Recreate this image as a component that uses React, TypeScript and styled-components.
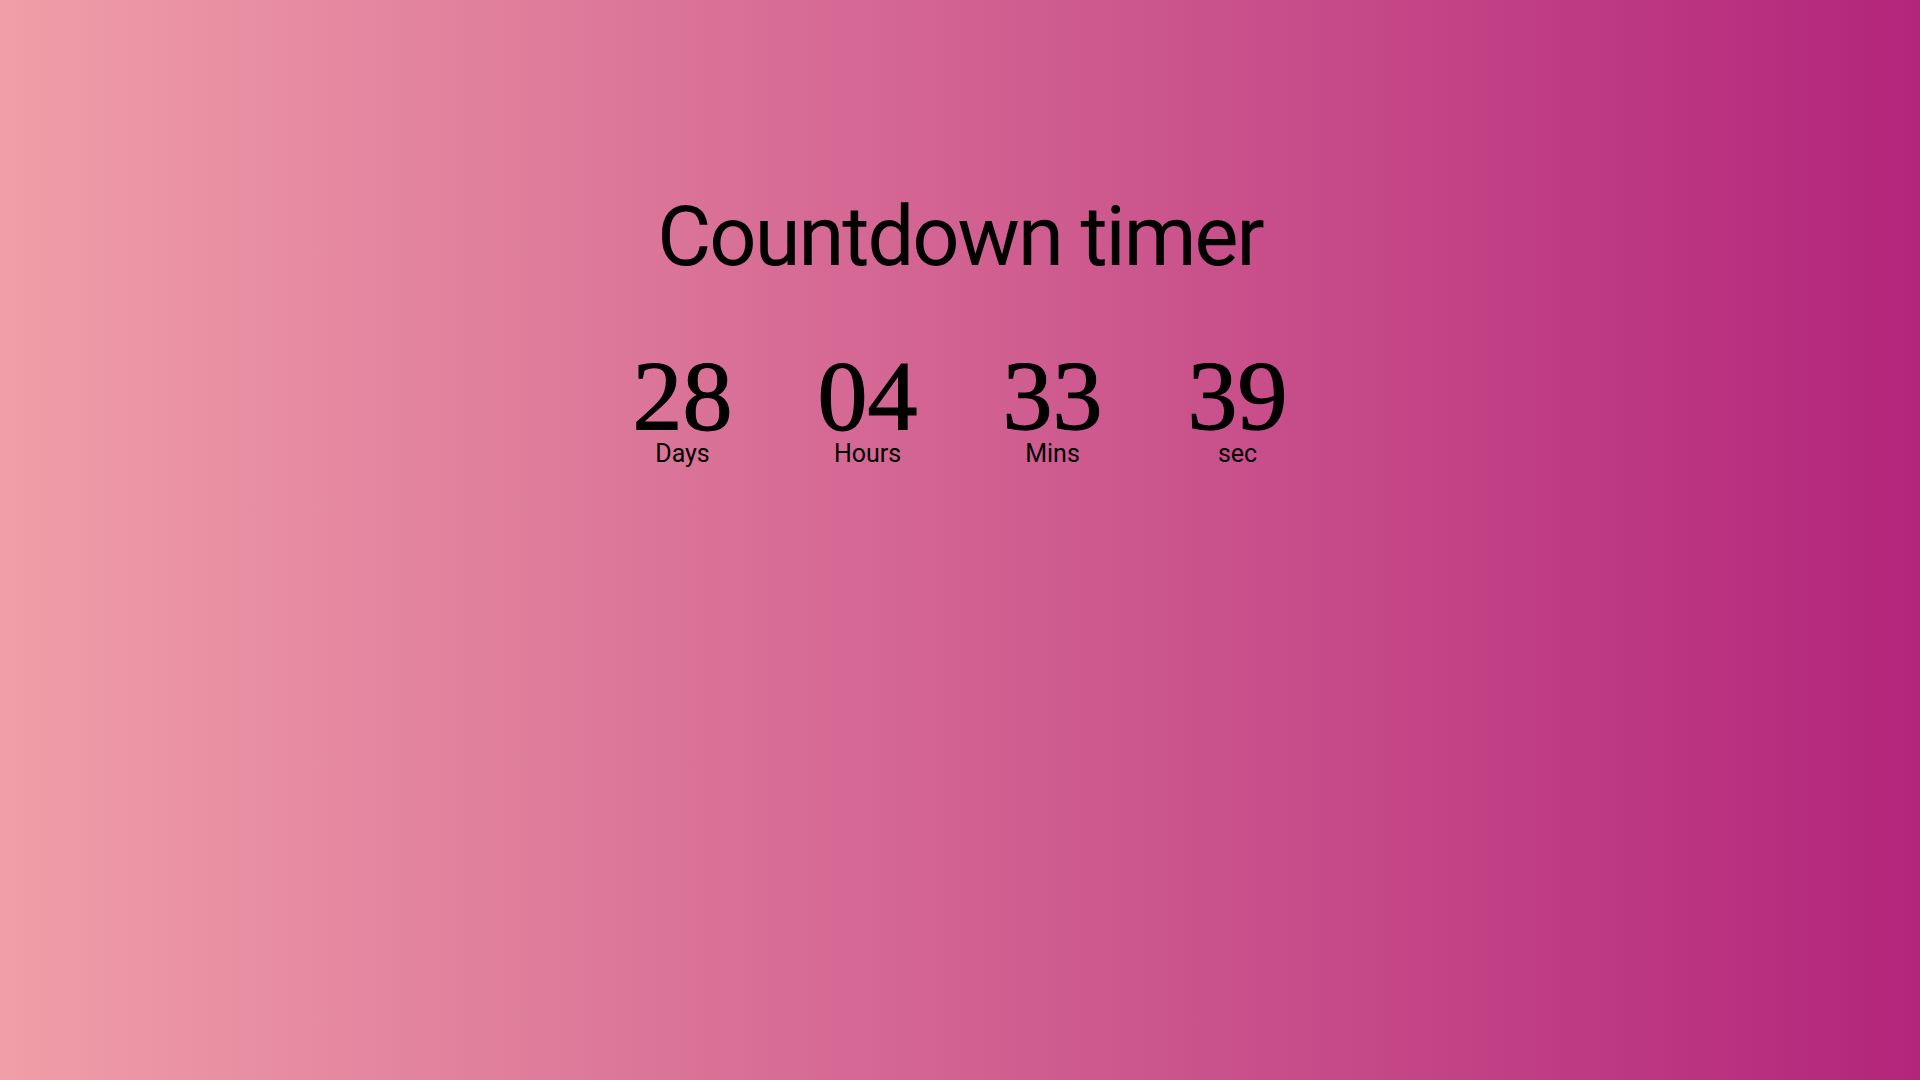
import React from "react";
import styled, { createGlobalStyle } from "styled-components";

const Global = createGlobalStyle`
  html, body { margin: 0; padding: 0; }
  body {
    min-height: 100vh;
    background: linear-gradient(to right, #f09ea8, #b3257b);
    font-family: Roboto, "Liberation Sans", sans-serif;
    color: #000;
  }
`;

const Page = styled.main`
  min-height: 100vh;
  display: flex;
  flex-direction: column;
  align-items: center;
  padding-top: 195px;
  box-sizing: border-box;
`;

const Title = styled.h1`
  margin: 0;
  font-family: Roboto, "Liberation Sans", sans-serif;
  font-weight: 400;
  font-size: 83px;
  line-height: 1;
  letter-spacing: -2px;
`;

const Timer = styled.div`
  display: grid;
  grid-template-columns: repeat(4, 185px);
  margin-top: 76px;
`;

const Unit = styled.div`
  display: flex;
  flex-direction: column;
  align-items: center;
`;

const Value = styled.span`
  font-family: "Liberation Serif", "Times New Roman", serif;
  font-size: 100px;
  font-weight: 400;
  line-height: 0.84;
  -webkit-text-stroke: 1.2px #000;
`;

const Label = styled.span`
  font-family: Roboto, "Liberation Sans", sans-serif;
  font-size: 25px;
  line-height: 1;
  margin-top: 3px;
`;

const units = [
  { value: "28", label: "Days" },
  { value: "04", label: "Hours" },
  { value: "33", label: "Mins" },
  { value: "39", label: "sec" },
];

export default function App() {
  return (
    <>
      <Global />
      <Page>
        <Title>Countdown timer</Title>
        <Timer>
          {units.map((u) => (
            <Unit key={u.label}>
              <Value>{u.value}</Value>
              <Label>{u.label}</Label>
            </Unit>
          ))}
        </Timer>
      </Page>
    </>
  );
}
